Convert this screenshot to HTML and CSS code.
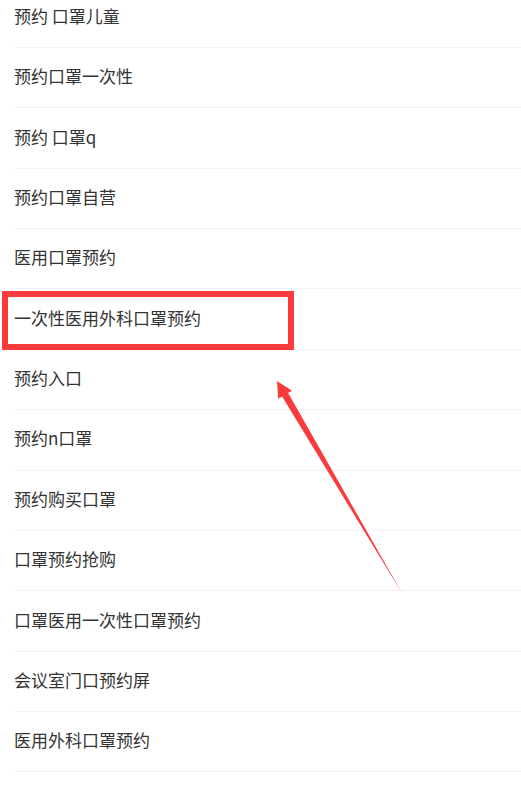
FILE: index.html
```html
<!DOCTYPE html>
<html lang="zh-CN">
<head>
<meta charset="utf-8">
<link rel="stylesheet" href="styles.css">
</head>
<body>
<ul class="list">
  <li class="item">预约 口罩儿童</li>
  <li class="item">预约口罩一次性</li>
  <li class="item">预约 口罩q</li>
  <li class="item">预约口罩自营</li>
  <li class="item">医用口罩预约</li>
  <li class="item">一次性医用外科口罩预约</li>
  <li class="item">预约入口</li>
  <li class="item">预约n口罩</li>
  <li class="item">预约购买口罩</li>
  <li class="item">口罩预约抢购</li>
  <li class="item">口罩医用一次性口罩预约</li>
  <li class="item">会议室门口预约屏</li>
  <li class="item">医用外科口罩预约</li>
</ul>
<div class="highlight"></div>
<svg class="arrow" width="521" height="785" viewBox="0 0 521 785">
  <polygon points="277,381 292,390.7 288.1,393 402.5,594 282.1,396.6 278.2,398.8" fill="#fb3b3b"/>
</svg>
</body>
</html>
```

FILE: styles.css
```css
html, body {
  margin: 0;
  padding: 0;
  background: #ffffff;
  overflow: hidden;
}
body {
  position: relative;
  width: 521px;
  height: 785px;
  font-family: "Noto Sans CJK SC", "Noto Sans", sans-serif;
}
.list {
  list-style: none;
  margin: -12.4px 0 0 0;
  padding: 0 0 0 14px;
}
.item {
  box-sizing: border-box;
  height: 60.375px;
  padding-bottom: 4px;
  display: flex;
  align-items: center;
  border-bottom: 1px solid #f1f1f1;
  font-size: 17px;
  color: #333333;
  line-height: 1;
}
.highlight {
  position: absolute;
  left: 2px;
  top: 291px;
  width: 292px;
  height: 59px;
  box-sizing: border-box;
  border: 6.5px solid #fb3b3b;
}
.arrow {
  position: absolute;
  left: 0;
  top: 0;
}
```
